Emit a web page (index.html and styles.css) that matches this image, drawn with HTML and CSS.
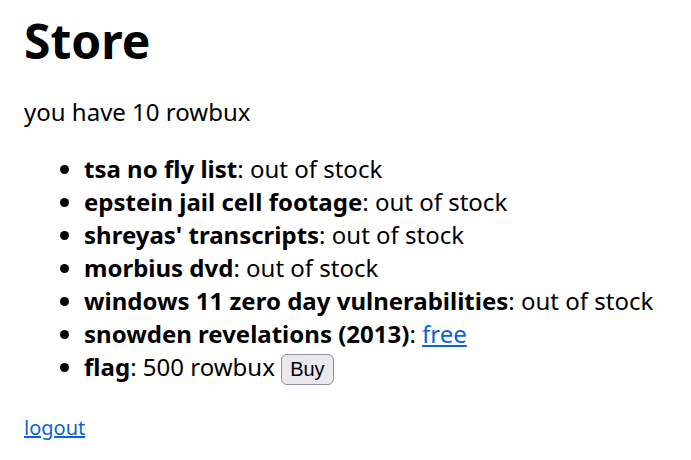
FILE: index.html
```html
<!DOCTYPE html>
<html>
<head>
<meta charset="utf-8">
<link rel="stylesheet" href="styles.css">
</head>
<body>
<h1 class="title">Store</h1>
<p class="balance">you have 10 rowbux</p>
<ul class="items">
<li><b>tsa no fly list</b>: out of stock</li>
<li><b>epstein jail cell footage</b>: out of stock</li>
<li><b>shreyas' transcripts</b>: out of stock</li>
<li><b>morbius dvd</b>: out of stock</li>
<li><b>windows 11 zero day vulnerabilities</b>: out of stock</li>
<li><b>snowden revelations (2013)</b>: <a href="#">free</a></li>
<li><b>flag</b>: 500 rowbux <button class="buy">Buy</button></li>
</ul>
<a class="logout" href="#">logout</a>
</body>
</html>
```
FILE: styles.css
```css
html, body {
  background: #fff;
}
body {
  margin: 8px 24px;
  font-family: "Noto Sans", sans-serif;
  font-size: 24px;
  color: #000;
}
.title {
  font-size: 48px;
  font-weight: 700;
  margin: 0 0 22px;
}
.balance {
  margin: 22px 0 24px;
}
.items {
  margin: 24px 0 24px;
  padding-left: 60px;
}
a {
  color: #0b62d6;
}
.logout {
  font-size: 20px;
}
.buy {
  font-family: "Liberation Sans", sans-serif;
  font-size: 20px;
  padding: 3px 8px;
  border: 1.5px solid #8f8f9d;
  border-radius: 6px;
  background: #e9e9ed;
  color: #000;
}
```
